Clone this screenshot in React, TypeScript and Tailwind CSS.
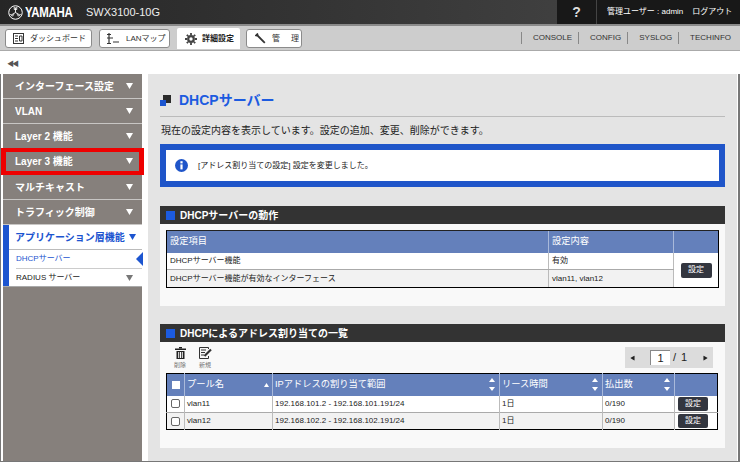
const font = "font-['Liberation_Sans','Noto_Sans_CJK_JP',sans-serif]"

const menuItems = ['インターフェース設定', 'VLAN', 'Layer 2 機能', 'Layer 3 機能', 'マルチキャスト', 'トラフィック制御']

function Triangle({ className }: { className: string }) {
  return (
    <svg width="7" height="6" viewBox="0 0 7 6" className={className}>
      <path d="M0 0H7L3.5 6Z" fill="currentColor" />
    </svg>
  )
}

function SortArrows() {
  return (
    <svg width="6" height="13" viewBox="0 0 6 13" className="text-white">
      <path d="M3 0L6 4H0Z M0 9H6L3 13Z" fill="currentColor" />
    </svg>
  )
}

function YamahaLogo() {
  return (
    <svg width="15" height="15" viewBox="0 0 30 30" fill="none" stroke="white">
      <circle cx="15" cy="15" r="13.5" strokeWidth="2" />
      <g strokeWidth="1.8">
        <path d="M15 15V5M12.5 4V9H17.5V4" />
        <path d="M15 15L6.5 20M4.5 18L9 22.5L11.5 18.5" />
        <path d="M15 15L23.5 20M25.5 18L21 22.5L18.5 18.5" />
      </g>
    </svg>
  )
}

function TopButton({ width, gap, icon, label }: { width: string; gap: string; icon: React.ReactNode; label: string }) {
  return (
    <div className={`${width} ${gap} h-[19px] flex items-center pl-[7px] bg-white border border-[#8b8b8b] rounded-[3px] text-[8px] text-[#333] whitespace-nowrap`}>
      {icon}
      <span>{label}</span>
    </div>
  )
}

function SectionHeader({ title }: { title: string }) {
  return (
    <div className="h-[18px] bg-[#333333] flex items-center pl-[6px] gap-[5px]">
      <div className="w-[9px] h-[9px] bg-[#1c5be0]" />
      <span className="text-[10px] font-bold text-white">{title}</span>
    </div>
  )
}

function SetButton({ className }: { className: string }) {
  return (
    <div className={`${className} bg-[#33363f] rounded-[2px] text-white text-[8px] flex items-center justify-center`}>
      設定
    </div>
  )
}

export default function App() {
  return (
    <div className={`${font} w-[740px] h-[462px] overflow-hidden flex flex-col bg-white text-[#222]`}>
      {/* Top bar */}
      <div className="h-6 shrink-0 flex bg-gradient-to-r from-[#262626] to-[#484848] text-white">
        <div className="flex items-center pl-2 gap-[2px] w-[86px]">
          <YamahaLogo />
          <span className="text-[14px] font-bold scale-x-[0.82] origin-left tracking-tight">YAMAHA</span>
        </div>
        <div className="flex items-center text-[11px] text-[#eee]">SWX3100-10G</div>
        <div className="ml-auto w-[183px] bg-[#181818] flex items-center text-[8px] whitespace-nowrap">
          <div className="w-10 h-full flex items-center justify-center text-[14px] font-bold text-[#ddd] border-r border-[#444]">?</div>
          <span className="ml-[10px]">管理ユーザー : admin</span>
          <span className="ml-[9px]">ログアウト</span>
        </div>
      </div>

      {/* Tab bar */}
      <div className="h-[27px] shrink-0 flex items-end bg-[#cdcdcd] border-t-2 border-[#8a8a8a] border-b border-b-[#aaa] pl-[5px]">
        <div className="flex items-start gap-[7px] h-[24px] pt-[3px]">
          <TopButton
            width="w-[87px]"
            gap="gap-[6px]"
            label="ダッシュボード"
            icon={
              <svg width="11" height="11" viewBox="0 0 11 11" fill="none" stroke="#333">
                <rect x="0.5" y="0.5" width="10" height="10" />
                <path d="M2 3H5M2 5.5H5M2 8H5M6.5 3H9V8H6.5Z" />
              </svg>
            }
          />
          <TopButton
            width="w-[71px]"
            gap="gap-[7px]"
            label="LANマップ"
            icon={
              <svg width="12" height="12" viewBox="0 0 12 12" fill="none" stroke="#333" strokeWidth="1.2">
                <path d="M2 0V11M0 1.5H4M0 5H6M0 10.5H4M6 9H12" />
              </svg>
            }
          />
          <div className="w-[63px] h-[21px] -mt-[1px] flex items-center gap-[5px] pl-2 bg-white rounded-t-[2px] text-[8px] font-bold whitespace-nowrap">
            <svg width="12" height="12" viewBox="0 0 12 12">
              <circle cx="6" cy="6" r="2.8" fill="none" stroke="#444" strokeWidth="2.2" />
              <path d="M6 0V12M0 6H12M1.8 1.8L10.2 10.2M10.2 1.8L1.8 10.2" stroke="#444" strokeWidth="1.8" strokeDasharray="2 8" />
            </svg>
            <span>詳細設定</span>
          </div>
          <div className="-ml-px w-[56px] h-[19px] flex items-center pl-2 bg-white border border-[#8b8b8b] rounded-[3px] text-[8px] text-[#333] whitespace-nowrap">
            <svg width="11" height="11" viewBox="0 0 11 11" fill="none" stroke="#333" strokeWidth="1.8" className="shrink-0">
              <path d="M1.5 1.5L9.8 9.8" />
              <path d="M0.5 3L3 0.5" />
            </svg>
            <span className="ml-[6px]">管</span>
            <span className="ml-[11px]">理</span>
          </div>
        </div>
        <div className="ml-auto h-full flex items-center text-[8px] text-[#333] pr-[9px]">
          <span className="border-l border-[#888] pl-[11px] pr-[6px] leading-[12px]">CONSOLE</span>
          <span className="border-l border-[#888] pl-[11px] pr-[6px] leading-[12px]">CONFIG</span>
          <span className="border-l border-[#888] pl-[11px] pr-[6px] leading-[12px]">SYSLOG</span>
          <span className="border-l border-[#888] pl-[11px] leading-[12px]">TECHINFO</span>
        </div>
      </div>

      {/* Collapse strip */}
      <div className="h-[23px] shrink-0 flex items-center pl-[7px] pt-[3px] text-[7px] text-[#555] tracking-[-2px]">◀◀</div>

      <div className="flex-1 min-h-0 flex border-l border-r-2 border-b border-[#777]">
        {/* Sidebar */}
        <div className="w-[139px] ml-[2px] shrink-0 bg-[#86807c] flex flex-col">
          {menuItems.map((item, i) => (
            <div
              key={item}
              className={`relative h-[25px] shrink-0 flex items-center justify-between pl-[12px] pr-[9px] text-[10px] font-bold text-white border-b border-[#c8c6c4] ${i === 4 ? 'mt-[1px]' : ''}`}
            >
              <span>{item}</span>
              <Triangle className="text-white" />
              {i === 3 && (
                <div className="absolute -left-[2px] -right-[2px] -top-[1px] -bottom-[2px] border-x-[5px] border-y-[4px] border-[#ee0000]" />
              )}
            </div>
          ))}
          <div className="h-[62px] shrink-0 flex bg-white border-b border-[#aaa]">
            <div className="w-[6px] bg-[#1c55d0]" />
            <div className="flex-1 flex flex-col">
              <div className="h-[25px] flex items-center pl-[6px] gap-[4px] text-[10px] font-bold text-[#1c55d0] border-b border-[#bbb]">
                <span>アプリケーション層機能</span>
                <Triangle className="text-[#1c55d0]" />
              </div>
              <div className="relative h-[19px] ml-[7px] flex items-center text-[8px] text-[#1c55d0] border-b border-[#ccc]">
                DHCPサーバー
                <div className="absolute -right-[1px] top-[2px] w-[7px] h-[14px] bg-[#1c55d0] [clip-path:polygon(100%_0,0_50%,100%_100%)]" />
              </div>
              <div className="h-[17px] ml-[7px] pr-[9px] flex items-center justify-between text-[8px]">
                RADIUS サーバー
                <Triangle className="text-[#777]" />
              </div>
            </div>
          </div>
        </div>

        {/* Main panel */}
        <div className="w-[589px] ml-[6px] shrink-0 bg-[#e4e4e4] px-3 flex flex-col">
          <div className="h-[43px] flex items-end pb-[6px] gap-2 border-b border-[#bbb]">
            <div className="relative w-[11px] h-[11px] mb-[4px]">
              <div className="absolute right-0 top-0 w-2 h-2 bg-[#2b2b2b]" />
              <div className="absolute left-0 bottom-0 w-[6px] h-[6px] bg-[#1c55d0]" />
            </div>
            <span className="text-[14px] leading-[20px] font-bold text-[#1c5be0]">DHCPサーバー</span>
          </div>
          <div className="h-[27px] flex items-center text-[10px] pl-px">
            現在の設定内容を表示しています。設定の追加、変更、削除ができます。
          </div>
          <div className="h-[43px] bg-white border-[6px] border-[#1f55c9] flex items-center pl-[9px] gap-[10px] text-[8px]">
            <svg width="13" height="13" viewBox="0 0 13 13">
              <circle cx="6.5" cy="6.5" r="6.5" fill="#1f55c9" />
              <rect x="5.4" y="2.2" width="2.2" height="2.2" fill="white" />
              <rect x="5.4" y="5.4" width="2.2" height="5" fill="white" />
            </svg>
            <span>[アドレス割り当ての設定] 設定を変更しました。</span>
          </div>

          {/* DHCP server operation */}
          <div className="mt-[19px] h-[100px] bg-[#f9f9f9]">
            <SectionHeader title="DHCPサーバーの動作" />
            <div className="mx-[6px] mt-[6px] border border-black border-t-[#222]">
              <div className="flex h-[22px] bg-[#6480bb] text-[9.25px] text-white">
                <div className="w-[382px] flex items-center pl-[3px] border-r border-[#a9b9da]">設定項目</div>
                <div className="w-[125px] flex items-center pl-[3px] border-r border-[#a9b9da]">設定内容</div>
                <div className="flex-1" />
              </div>
              <div className="flex h-[34px] text-[8px]">
                <div className="w-[507px] flex flex-col">
                  <div className="flex h-[17px] bg-white border-b border-[#aaa]">
                    <div className="w-[382px] flex items-center pl-[3px] border-r border-[#bbb]">DHCPサーバー機能</div>
                    <div className="flex-1 flex items-center pl-[3px] border-r border-[#bbb]">有効</div>
                  </div>
                  <div className="flex h-[17px] bg-[#f2f2f2]">
                    <div className="w-[382px] flex items-center pl-[3px] border-r border-[#bbb]">DHCPサーバー機能が有効なインターフェース</div>
                    <div className="flex-1 flex items-center pl-[3px] border-r border-[#bbb]">vlan11, vlan12</div>
                  </div>
                </div>
                <div className="flex-1 bg-white flex items-center justify-center">
                  <SetButton className="w-[31px] h-[15px]" />
                </div>
              </div>
            </div>
          </div>

          {/* Address allocation list */}
          <div className="mt-[18px] h-[124px] bg-[#f9f9f9]">
            <SectionHeader title="DHCPによるアドレス割り当ての一覧" />
            <div className="flex h-[31px] pt-[5px] pl-[13px] pr-[12px]">
              <div className="w-[14px] flex flex-col items-center text-[6px] text-[#777]">
                <svg width="11" height="12" viewBox="0 0 11 12" fill="#222">
                  <rect x="0" y="1.5" width="11" height="1.5" />
                  <rect x="4" y="0" width="3" height="1.5" />
                  <path d="M1.5 4H9.5V12H1.5Z M3.2 5V11H4.2V5Z M5 5V11H6V5Z M6.8 5V11H7.8V5Z" fillRule="evenodd" />
                </svg>
                <span className="mt-[2px]">削除</span>
              </div>
              <div className="w-[14px] ml-[11px] flex flex-col items-center text-[6px] text-[#777]">
                <svg width="13" height="12" viewBox="0 0 13 12" fill="none" stroke="#333">
                  <path d="M9.5 9V11.5H0.5V0.5H9.5V2" />
                  <path d="M2 3H7M2 5.5H6M2 8H5" />
                  <path d="M5.5 9L12 2.5" strokeWidth="2.2" />
                </svg>
                <span className="mt-[2px]">新規</span>
              </div>
              <div className="ml-auto w-[88px] h-[21px] bg-[#dcdcdc] flex items-center text-[#222]">
                <Triangle className="ml-[4px] rotate-90 scale-75" />
                <div className="ml-[14px] w-[20px] h-[15px] bg-white border-l border-t border-[#888] text-[11px] leading-[14px] text-center">1</div>
                <span className="ml-[3px] text-[11px] tracking-[1px]">/ 1</span>
                <Triangle className="ml-[14px] -rotate-90 scale-75" />
              </div>
            </div>
            <table className="mx-[6px] w-[552px] table-fixed border-collapse border border-black text-[8px]">
              <colgroup>
                <col className="w-[18px]" />
                <col className="w-[88px]" />
                <col className="w-[227px]" />
                <col className="w-[103px]" />
                <col className="w-[72px]" />
                <col />
              </colgroup>
              <thead>
                <tr className="h-[22px] bg-[#6480bb] text-white text-[9.25px] font-normal">
                  <th className="border-r border-[#a9b9da] font-normal">
                    <div className="w-[8px] h-[8px] mx-auto bg-white" />
                  </th>
                  <th className="border-r border-[#a9b9da] font-normal text-left pl-[2px]">
                    <div className="flex items-center justify-between pr-[3px]">
                      プール名
                      <svg width="5" height="4" viewBox="0 0 5 4"><path d="M2.5 0L5 4H0Z" fill="white" /></svg>
                    </div>
                  </th>
                  {['IPアドレスの割り当て範囲', 'リース時間', '払出数'].map((h) => (
                    <th key={h} className="border-r border-[#a9b9da] font-normal text-left pl-[2px]">
                      <div className="flex items-center justify-between pr-[4px]">
                        {h}
                        <SortArrows />
                      </div>
                    </th>
                  ))}
                  <th />
                </tr>
              </thead>
              <tbody>
                {['vlan11|192.168.101.2 - 192.168.101.191/24', 'vlan12|192.168.102.2 - 192.168.102.191/24'].map((row, i) => {
                  const [name, range] = row.split('|')
                  return (
                    <tr key={name} className={`h-[17px] ${i === 0 ? 'bg-white border-b border-[#aaa]' : 'bg-[#f2f2f2]'}`}>
                      <td className="border-r border-[#bbb]">
                        <div className="w-[9px] h-[9px] mx-auto bg-white border border-[#666] rounded-[2px]" />
                      </td>
                      <td className="border-r border-[#bbb] pl-[2px]">{name}</td>
                      <td className="border-r border-[#bbb] pl-[2px]">{range}</td>
                      <td className="border-r border-[#bbb] pl-[2px]">1日</td>
                      <td className="border-r border-[#bbb] pl-[2px]">0/190</td>
                      <td className="bg-white">
                        <SetButton className="w-[30px] h-[14px] ml-[3px]" />
                      </td>
                    </tr>
                  )
                })}
              </tbody>
            </table>
          </div>
        </div>
      </div>
    </div>
  )
}
